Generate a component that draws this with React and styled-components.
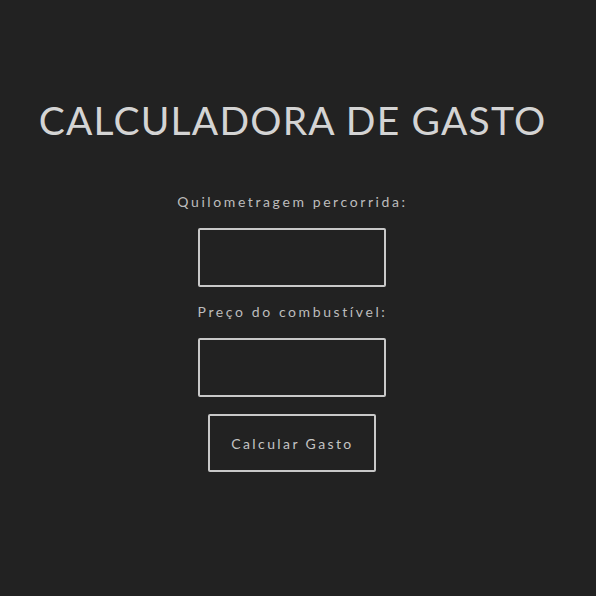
import styled, { createGlobalStyle } from 'styled-components';

const GlobalStyle = createGlobalStyle`
    html, body {
        margin: 0;
        padding: 0;
        background-color: #222222;
    }
    body {
        font-family: Lato, "Noto Sans", sans-serif;
    }
`

const Page = styled.main`
    min-height: 596px;
    box-sizing: border-box;
    padding: 96px 11px 0 0;
    display: flex;
    flex-direction: column;
    align-items: center;
    color: #cfcfcf;
`

const Title = styled.h1`
    margin: 0 0 49px;
    font-size: 39px;
    font-weight: 400;
    letter-spacing: 1.2px;
    line-height: 48px;
    white-space: nowrap;
    color: #d4d4d4;
`

const Form = styled.form`
    display: flex;
    flex-direction: column;
    align-items: center;
`

const Label = styled.label`
    font-size: 14px;
    letter-spacing: 2.6px;
    color: #bdbdbd;
    line-height: 18px;
    margin-bottom: 17px;
`

const Input = styled.input`
    width: 188px;
    height: 59px;
    box-sizing: border-box;
    background: transparent;
    border: 2px solid #c8c8c8;
    border-radius: 2px;
    color: #ddd;
    font-size: 16px;
    padding: 0 10px;
    margin-bottom: 16px;
    outline: none;
`

const Button = styled.button`
    width: 168px;
    height: 58px;
    margin-top: 1px;
    box-sizing: border-box;
    background: transparent;
    border: 2px solid #c8c8c8;
    border-radius: 2px;
    color: #c4c4c4;
    font-family: inherit;
    font-size: 14px;
    letter-spacing: 2.4px;
    cursor: pointer;
`

const App = () => {
    return (
        <Page>
            <GlobalStyle />
            <Title>CALCULADORA DE GASTO</Title>
            <Form onSubmit={e => e.preventDefault()}>
                <Label htmlFor='km'>Quilometragem percorrida:</Label>
                <Input id='km' type='text' />
                <Label htmlFor='preco'>Preço do combustível:</Label>
                <Input id='preco' type='text' />
                <Button type='submit'>Calcular Gasto</Button>
            </Form>
        </Page>
    )
}

export default App;
